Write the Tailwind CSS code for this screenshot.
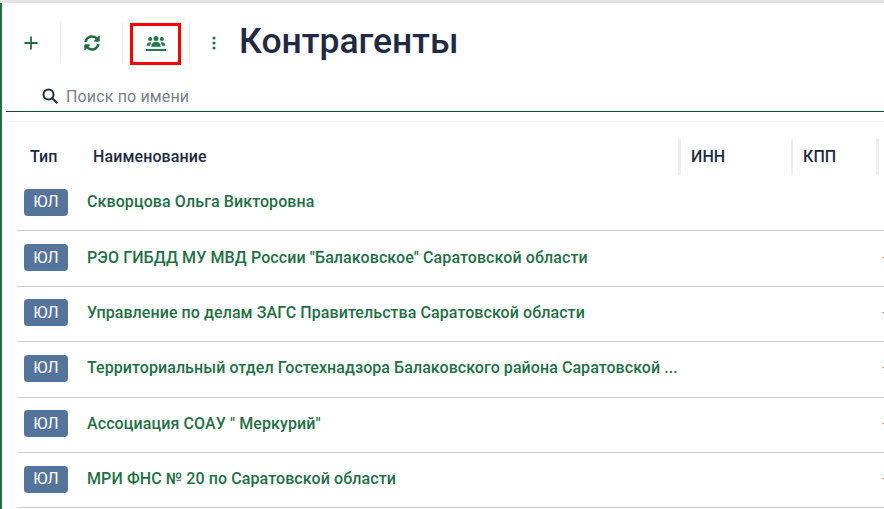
<!DOCTYPE html>
<html lang="ru">
<head>
  <meta charset="UTF-8" />
  <title>Контрагенты</title>
  <meta name="viewport" content="width=device-width, initial-scale=1" />
  <script src="https://cdn.jsdelivr.net/npm/@tailwindcss/browser@4"></script>
</head>
<body class="bg-white font-['Roboto',sans-serif] w-[884px] h-[509px] overflow-hidden">
  <div class="h-[3px] bg-[#e3e3e3]"></div>
  <div class="h-[506px] border-l-2 border-[#1f6f43] pl-1 overflow-hidden">

    <!-- toolbar -->
    <div class="flex items-center h-[78px]">
      <button class="w-[55px] h-[41px] pt-[2px] pr-[5px] flex items-center justify-center border-r border-[#eceef2]">
        <svg class="w-[14px] h-[14px] text-[#1f6f43]" viewBox="0 0 14 14" fill="none" stroke="currentColor" stroke-width="1.8"><path d="M7 0.5v13M0.5 7h13"/></svg>
      </button>
      <button class="w-[62px] h-[41px] pt-[2px] pl-[1px] flex items-center justify-center border-r border-[#eceef2]">
        <svg class="w-[16px] h-[16px] text-[#1f6f43]" viewBox="0 0 512 512" fill="currentColor"><path d="M370.7 133.3C339.5 104 298.9 88 255.800 88c-77.500.1-144.300 53.200-162.800 126.900-1.300 5.400-6.100 9.100-11.600 9.100H24.100c-7.500 0-13.200-6.800-11.800-14.200C33.900 94.900 134.800 8 256 8c66.400 0 126.800 26.100 171.300 68.700L463 41c15.100-15.100 41-4.400 41 17v134c0 13.300-10.700 24-24 24H346c-21.400 0-32.100-25.900-17-41l41.700-41.700zM32 296h134c21.400 0 32.100 25.900 17 41l-41.700 41.700c31.200 29.300 71.800 45.300 114.900 45.300 77.400-.1 144.300-53.100 162.800-126.800 1.300-5.400 6.100-9.100 11.600-9.100h57.300c7.500 0 13.200 6.800 11.800 14.200C478.100 417.100 377.200 504 256 504c-66.400 0-126.800-26.100-171.300-68.700L49 471c-15.100 15.100-41 4.400-41-17V320c0-13.300 10.700-24 24-24z"/></svg>
      </button>
      <div class="w-[67px] h-[41px] pl-[7px] flex items-center border-r border-[#eceef2]">
        <button class="w-[51px] h-[42px] mt-[4px] border-[3px] border-[#ff0000] flex items-center justify-center">
          <svg class="w-[20px] h-[17px] text-[#1f7a4a]" viewBox="0 0 20 17" fill="currentColor">
            <circle cx="4.200" cy="3" r="2.100"/><circle cx="10" cy="2.500" r="2.500"/><circle cx="15.800" cy="3" r="2.100"/>
            <path d="M0.800 9.800c0-2.300 1-3.500 3.200-3.500 .8 0 1.300.2 1.600.5-.9.6-1.400 1.600-1.500 3z"/>
            <path d="M19.200 9.800c0-2.300-1-3.500-3.200-3.500-.8 0-1.300.2-1.600.5 .9.6 1.400 1.600 1.500 3z"/>
            <path d="M5.300 10.800c0-3.200 1.800-5.100 4.700-5.100s4.700 1.900 4.700 5.100z"/>
            <rect x="0" y="13" width="20" height="2"/>
          </svg>
        </button>
      </div>
      <button class="w-[46px] h-[41px] pt-[2px] pl-[1px] flex items-center justify-center">
        <svg class="w-[4px] h-[14px] text-[#1f7a4a]" viewBox="0 0 4 14" fill="currentColor"><circle cx="2" cy="2" r="1.600"/><circle cx="2" cy="7" r="1.600"/><circle cx="2" cy="12" r="1.600"/></svg>
      </button>
      <h1 class="text-[35.5px] leading-none font-medium text-[#1f2a44] ml-[3px]">Контрагенты</h1>
    </div>

    <!-- search -->
    <div class="flex items-center h-[31px] border-b border-[#1d4a30] pl-[36px]">
      <svg class="w-[16px] h-[16px] text-[#1f2a44]" viewBox="0 0 16 16" fill="none" stroke="currentColor" stroke-width="2"><circle cx="6.500" cy="6.500" r="5"/><path d="M10.300 10.300l5 5"/></svg>
      <span class="ml-[8px] pt-[1px] text-[16px] tracking-[0.15px] text-[#7a8088]">Поиск по имени</span>
    </div>
    <div class="h-[10px] border-b border-[#f3f3f3]"></div>

    <!-- table header -->
    <div class="flex items-center h-[36px] mt-[17px] mb-[1px] text-[16px] font-medium text-[#1f2a44] tracking-[0.1px]">
      <div class="w-[81px] pl-[24px] whitespace-nowrap">Тип</div>
      <div class="w-[591px] pl-[6px]">Наименование</div>
      <div class="w-[113px] pl-[10px] h-full flex items-center border-l-[3px] border-[#eeeeee]">ИНН</div>
      <div class="w-[85px] pl-[10px] h-full flex items-center border-l-2 border-[#eeeeee]">КПП</div>
      <div class="flex-1 h-full border-l-[3px] border-[#eeeeee]"></div>
    </div>

    <!-- rows -->
    <div class="ml-[11px] text-[16px]">
      <div class="flex items-center h-[55.4px] border-b border-[#cccccc] pb-[2px] overflow-hidden">
        <span class="shrink-0 w-[44px] h-[27px] ml-[7px] rounded-[4px] bg-[#55749c] text-white flex items-center justify-center">ЮЛ</span>
        <a class="shrink-0 ml-[19px] w-[590px] truncate font-medium tracking-[0.1px] text-[#1f7045]">Скворцова Ольга Викторовна</a>
      </div>
      <div class="flex items-center h-[55.4px] border-b border-[#cccccc] pb-[2px] overflow-hidden">
        <span class="shrink-0 w-[44px] h-[27px] ml-[7px] rounded-[4px] bg-[#55749c] text-white flex items-center justify-center">ЮЛ</span>
        <a class="shrink-0 ml-[19px] w-[590px] truncate font-medium tracking-[0.1px] text-[#1f7045]">РЭО ГИБДД МУ МВД России "Балаковское" Саратовской области</a>
        <span class="shrink-0 ml-[206px] text-[#1f2a44]">-</span>
      </div>
      <div class="flex items-center h-[55.4px] border-b border-[#cccccc] pb-[2px] overflow-hidden">
        <span class="shrink-0 w-[44px] h-[27px] ml-[7px] rounded-[4px] bg-[#55749c] text-white flex items-center justify-center">ЮЛ</span>
        <a class="shrink-0 ml-[19px] w-[590px] truncate font-medium tracking-[0.08px] text-[#1f7045]">Управление по делам ЗАГС Правительства Саратовской области</a>
        <span class="shrink-0 ml-[206px] text-[#1f2a44]">-</span>
      </div>
      <div class="flex items-center h-[55.4px] border-b border-[#cccccc] pb-[2px] overflow-hidden">
        <span class="shrink-0 w-[44px] h-[27px] ml-[7px] rounded-[4px] bg-[#55749c] text-white flex items-center justify-center">ЮЛ</span>
        <a class="shrink-0 ml-[19px] w-[594px] whitespace-nowrap font-medium tracking-[0.07px] text-[#1f7045]">Территориальный отдел Гостехнадзора Балаковского района Саратовской ...</a>
        <span class="shrink-0 ml-[202px] text-[#1f2a44]">-</span>
      </div>
      <div class="flex items-center h-[55.4px] border-b border-[#cccccc] pb-[2px] overflow-hidden">
        <span class="shrink-0 w-[44px] h-[27px] ml-[7px] rounded-[4px] bg-[#55749c] text-white flex items-center justify-center">ЮЛ</span>
        <a class="shrink-0 ml-[19px] w-[590px] truncate font-medium tracking-[0.1px] text-[#1f7045]">Ассоциация СОАУ " Меркурий"</a>
        <span class="shrink-0 ml-[206px] text-[#1f2a44]">-</span>
      </div>
      <div class="flex items-center h-[55.4px] border-b border-[#cccccc] pb-[2px] overflow-hidden">
        <span class="shrink-0 w-[44px] h-[27px] ml-[7px] rounded-[4px] bg-[#55749c] text-white flex items-center justify-center">ЮЛ</span>
        <a class="shrink-0 ml-[19px] w-[590px] truncate font-medium tracking-[0.1px] text-[#1f7045]">МРИ ФНС № 20 по Саратовской области</a>
        <span class="shrink-0 ml-[206px] text-[#1f2a44]">-</span>
      </div>
    </div>
  </div>
</body>
</html>
